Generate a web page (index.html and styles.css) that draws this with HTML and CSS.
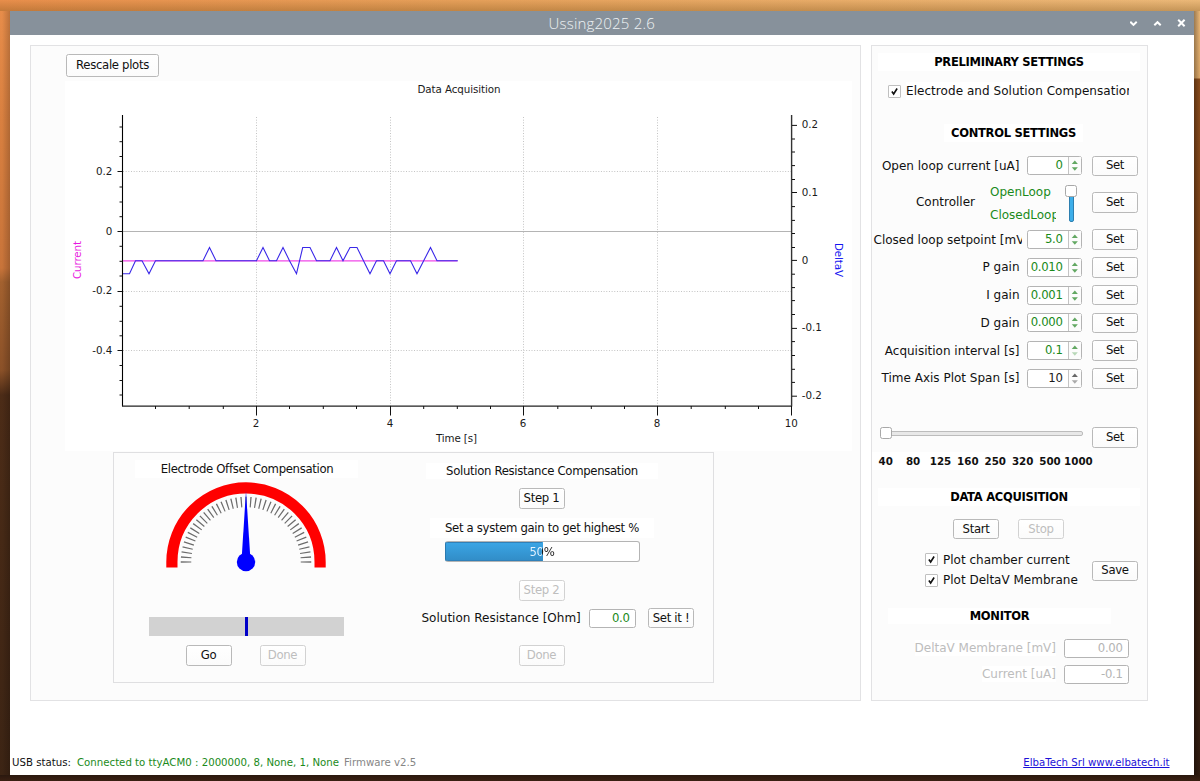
FILE: index.html
```html
<!DOCTYPE html>
<html lang="en">
<head>
<meta charset="utf-8">
<title>Ussing2025 2.6</title>
<link rel="stylesheet" href="styles.css">
</head>
<body>
<div class="window">
  <header class="titlebar">
    <span class="title">Ussing2025 2.6</span>
    <svg class="winbuttons" width="60" height="24" viewBox="1130 11 60 24" fill="none" stroke="#fff" stroke-width="2">
      <path d="M1130.3 21.8l3.2 3.1 3.2-3.1"/>
      <path d="M1154.3 25.3l3.2-3.1 3.2 3.1"/>
      <path d="M1178.2 19.8l6.4 6.4M1184.6 19.8l-6.4 6.4"/>
    </svg>
  </header>
  <main class="content">
    <section class="panel left">
      <button class="btn rescale">Rescale plots</button>
      <svg class="plot" width="787" height="370" viewBox="65 81 787 370">
        <rect x="65" y="81" width="787" height="370" fill="#fff"/>
        <g class="grid">
          <path d="M256.5 117V406M390.5 117V406M523.5 117V406M657.5 117V406"/>
          <path d="M123 171.5H791M123 291.5H791M123 350.5H791"/>
        </g>
        <path d="M123 231.5H791" stroke="#b4b4b4"/>
        <path d="M123 260.8H457.5" stroke="#f048e8" stroke-width="1.2"/>
        <polyline fill="none" stroke="#3a28e8" stroke-width="1.1" points="122,273.7 129.5,273.7 135.5,260.7 142,260.7 149,273.7 155.5,260.7 203,260.7 209.5,247.5 216,260.7 256.5,260.7 263,247.5 269.5,260.7 276.5,260.7 283,247.5 289.5,260.7 296.5,273.7 302.7,247.5 310,247.5 316.5,260.7 330,260.7 336.5,247.5 343,260.7 350,247.5 357,247.5 363.5,260.7 370,273.7 376.5,260.7 383.5,260.7 390,273.7 396.5,260.7 410.5,260.7 417,273.7 430.5,247.5 437,260.7 457.8,260.7"/>
        <path d="M122.5 115V406.3" stroke="#000" stroke-width="1.1"/>
        <path d="M122 406.2H792" stroke="#222" stroke-width="1.3"/>
        <path d="M791.6 115V406.5" stroke="#333" stroke-width="1.4"/>
        <g class="ticks">
          <path d="M117.5 171.5h5M117.5 231.5h5M117.5 291.5h5M117.5 350.5h5"/>
          <path d="M119.5 127h3M119.5 141.7h3M119.5 156.5h3M119.5 187h3M119.5 202h3M119.5 216.7h3M119.5 246.3h3M119.5 261.3h3M119.5 276h3M119.5 306.3h3M119.5 321.3h3M119.5 335.8h3M119.5 365.5h3M119.5 380.5h3M119.5 395h3"/>
          <path d="M792 125.4h5M792 192.5h5M792 260.4h5M792 328.4h5M792 396.2h5"/>
          <path d="M792 139h3M792 152h3M792 165.6h3M792 179.5h3M792 206.6h3M792 220.4h3M792 233.5h3M792 247.5h3M792 274.2h3M792 287.6h3M792 300.6h3M792 314.5h3M792 341.6h3M792 355.5h3M792 369.3h3M792 382.4h3"/>
          <path d="M256.5 406v9.5M390.5 406v9.5M523.5 406v9.5M657.5 406v9.5M791.5 406v9.5"/>
          <path d="M155.5 406v3M189.2 406v3M223.3 406v3M289.5 406v3M323.3 406v3M356.5 406v3M423.7 406v3M457.3 406v3M490.5 406v3M557.8 406v3M591.3 406v3M624.5 406v3M691.2 406v3M725.3 406v3M758.5 406v3"/>
        </g>
        <g class="plottext">
          <text x="459" y="93.3" text-anchor="middle" textLength="83">Data Acquisition</text>
          <g text-anchor="end">
            <text x="112.3" y="175">0.2</text>
            <text x="112.3" y="235">0</text>
            <text x="112.3" y="294.3">-0.2</text>
            <text x="112.3" y="354.3">-0.4</text>
          </g>
          <text x="801.8" y="127.8">0.2</text>
          <text x="801.8" y="196">0.1</text>
          <text x="801.8" y="264">0</text>
          <text x="801.8" y="331">-0.1</text>
          <text x="801.8" y="399.3">-0.2</text>
          <g text-anchor="middle">
            <text x="256" y="427.3">2</text>
            <text x="390" y="427.3">4</text>
            <text x="523" y="427.3">6</text>
            <text x="657" y="427.3">8</text>
            <text x="791.3" y="427.3">10</text>
            <text x="456.5" y="441.8" textLength="41">Time [s]</text>
            <text transform="translate(80.6 260) rotate(-90)" fill="#e818e0" textLength="38">Current</text>
            <text transform="translate(835 260) rotate(90)" fill="#1414f0" textLength="34">DeltaV</text>
          </g>
        </g>
      </svg>
      <div class="frame">
        <div class="offset">
          <div class="cap cap-offset">Electrode Offset Compensation</div>
          <svg class="gauge" width="162" height="92" viewBox="165 481 162 92">
            <clipPath id="upper"><rect x="165" y="481" width="162" height="81.9"/></clipPath>
            <path d="M171.9 567.6V562A74.1 74.1 0 0 1 320.1 562V567.6" fill="none" stroke="#f00" stroke-width="11.2"/>
            <circle cx="246" cy="562" r="60" fill="none" stroke="#6c6c6c" stroke-width="10.5" pathLength="80" stroke-dasharray=".26 .74" stroke-dashoffset=".13" clip-path="url(#upper)"/>
            <path d="M246 491L250.2 556H241.8Z" fill="#00f"/>
            <circle cx="246" cy="562" r="9.2" fill="#00f"/>
          </svg>
          <div class="balance"><i></i></div>
          <div class="pair"><button class="btn">Go</button><button class="btn" disabled>Done</button></div>
        </div>
        <div class="resistance">
          <div class="cap cap-res">Solution Resistance Compensation</div>
          <button class="btn step1">Step 1</button>
          <div class="cap cap-gain">Set a system gain to get highest %</div>
          <div class="progress"><span>50%</span></div>
          <button class="btn step2" disabled>Step 2</button>
          <div class="ohm"><span class="lbl">Solution Resistance [Ohm]</span><span class="field">0.0</span><button class="btn">Set it !</button></div>
          <button class="btn done" disabled>Done</button>
        </div>
      </div>
    </section>

    <section class="panel right">
      <h2 class="h-pre">PRELIMINARY SETTINGS</h2>
      <div class="check comp"><svg class="box" viewBox="0 0 13 13"><path d="M3.4 6.5l2.1 3L9.6 3"/></svg><span class="clip">Electrode and Solution Compensation</span></div>
      <h2 class="h-ctl"><span>CONTROL SETTINGS</span></h2>
      <div class="row"><span class="lbl">Open loop current [uA]</span><span class="spin">0<svg viewBox="0 0 13 17"><path d="M3 7l3.3-4 3.3 4z"/><path d="M3 10.3l3.3 4 3.3-4z"/></svg></span><button class="btn">Set</button></div>
      <div class="controller">
        <span class="lbl">Controller</span>
        <div class="modes"><span>OpenLoop</span><span>ClosedLoop</span></div>
        <div class="vslider"><b></b></div>
        <button class="btn">Set</button>
      </div>
      <div class="row"><span class="lbl cut">Closed loop setpoint [mV]</span><span class="spin">5.0<svg viewBox="0 0 13 17"><path d="M3 7l3.3-4 3.3 4z"/><path d="M3 10.3l3.3 4 3.3-4z"/></svg></span><button class="btn">Set</button></div>
      <div class="row"><span class="lbl">P gain</span><span class="spin">0.010<svg viewBox="0 0 13 17"><path d="M3 7l3.3-4 3.3 4z"/><path d="M3 10.3l3.3 4 3.3-4z"/></svg></span><button class="btn">Set</button></div>
      <div class="row"><span class="lbl">I gain</span><span class="spin">0.001<svg viewBox="0 0 13 17"><path d="M3 7l3.3-4 3.3 4z"/><path d="M3 10.3l3.3 4 3.3-4z"/></svg></span><button class="btn">Set</button></div>
      <div class="row"><span class="lbl">D gain</span><span class="spin">0.000<svg viewBox="0 0 13 17"><path d="M3 7l3.3-4 3.3 4z"/><path d="M3 10.3l3.3 4 3.3-4z"/></svg></span><button class="btn">Set</button></div>
      <div class="row"><span class="lbl">Acquisition interval [s]</span><span class="spin">0.1<svg viewBox="0 0 13 17"><path d="M3 7l3.3-4 3.3 4z"/><path class="off" d="M3 10.3l3.3 4 3.3-4z"/></svg></span><button class="btn">Set</button></div>
      <div class="row"><span class="lbl">Time Axis Plot Span [s]</span><span class="spin black">10<svg viewBox="0 0 13 17"><path d="M3 7l3.3-4 3.3 4z"/><path class="off" d="M3 10.3l3.3 4 3.3-4z"/></svg></span><button class="btn">Set</button></div>
      <div class="sliderrow"><div class="hslider"><b></b></div><button class="btn">Set</button></div>
      <div class="scale"><span>40</span><span>80</span><span>125</span><span>160</span><span>250</span><span>320</span><span>500</span><span>1000</span></div>
      <h2 class="h-acq">DATA ACQUISITION</h2>
      <div class="startstop"><button class="btn">Start</button><button class="btn" disabled>Stop</button></div>
      <div class="plots">
        <div class="checks">
          <div class="check"><svg class="box" viewBox="0 0 13 13"><path d="M3.4 6.5l2.1 3L9.6 3"/></svg><span>Plot chamber current</span></div>
          <div class="check"><svg class="box" viewBox="0 0 13 13"><path d="M3.4 6.5l2.1 3L9.6 3"/></svg><span>Plot DeltaV Membrane</span></div>
        </div>
        <button class="btn">Save</button>
      </div>
      <h2 class="h-mon"><span>MONITOR</span></h2>
      <div class="mon"><span class="lbl">DeltaV Membrane [mV]</span><span class="field">0.00</span></div>
      <div class="mon"><span class="lbl">Current [uA]</span><span class="field">-0.1</span></div>
    </section>
  </main>
  <footer class="status">
    <span class="usb">USB status:</span><span class="conn">Connected to ttyACM0 : 2000000, 8, None, 1, None</span><span class="fw">Firmware v2.5</span>
    <a href="#">ElbaTech Srl www.elbatech.it</a>
  </footer>
</div>
</body>
</html>
```
FILE: styles.css
```css
*, *::before { box-sizing: border-box; }
body {
  margin: 0;
  width: 1200px;
  height: 781px;
  overflow: hidden;
  padding: 11px 6.5px 5.5px 10px;
  font: 12px/16px "DejaVu Sans", sans-serif;
  color: #111;
  background:
    linear-gradient(#0000, #7a501855) 0 0 / 1200px 11px no-repeat,
    linear-gradient(90deg, #e88e4b, #e5a05a 40%, #ebb878 100%) 0 0 / 1200px 11px no-repeat,
    linear-gradient(#2a180e, #3a2012) 0 775px / 1200px 6px no-repeat,
    linear-gradient(90deg, #0000 20%, #00000030) 0 0 / 10px 781px no-repeat,
    linear-gradient(#e88e4b, #d98040 120px, #c8743a 268px, #a3612f 282px, #8b5128 370px, #4c2c17 395px, #3c2414 781px) 0 0 / 10px 781px no-repeat,
    linear-gradient(90deg, #00000060, #0000) 1193px 11px / 7px 770px no-repeat,
    linear-gradient(#ebb878, #dca868 78px, #8a4c1c 79px, #7c441a 260px, #6a3815 420px, #3e2313 580px, #301b10) 1193px 0 / 7px 781px no-repeat;
}
.window { height: 764px; display: flex; flex-direction: column; background: #fff; }

.titlebar {
  height: 24px;
  flex: none;
  display: grid;
  grid-template-columns: 60px 1fr 60px;
  background: #87919b;
  padding-right: 4px;
}
.title {
  grid-column: 2;
  text-align: center;
  padding-left: 4px;
  font: 300 15px/24px "Open Sans", "Noto Sans", sans-serif;
  letter-spacing: .2px;
  color: #eef1f4;
}

.content { display: flex; gap: 10px; padding: 10px 0 0 19.5px; height: 667px; flex: none; }
.panel { background: #fcfcfc; border: 1px solid #e2e2e4; height: 656px; flex: none; }
.left { width: 831.5px; padding: 8px 0 0 34.5px; display: flex; flex-direction: column; align-items: flex-start; }
.right { width: 277px; }

.btn, .cap, .progress, .field, .spin {
  font: 11.7px/17px "DejaVu Sans", sans-serif;
  letter-spacing: -.33px;
}
.btn {
  width: 46px;
  height: 20.5px;
  flex: none;
  padding: 0;
  border: 1px solid #b9b9b9;
  border-radius: 2.5px;
  background: linear-gradient(#fff, #fbfbfb);
  color: #111;
  white-space: nowrap;
}
.btn:disabled { color: #bebebe; border-color: #d2d2d2; }
.rescale { width: 93px; height: 23px; margin: 0 0 4px 1px; }
.plot { display: block; flex: none; }
.grid path { stroke: #c4c4c4; stroke-dasharray: 1 1.67; fill: none; }
.ticks path { stroke: #111; fill: none; }
.plottext { font: 10.3px "DejaVu Sans", sans-serif; fill: #1a1a1a; }

.frame {
  width: 601px;
  height: 231px;
  margin: 1px 0 0 47.5px;
  border: 1px solid #dfdfe1;
  display: flex;
  flex: none;
}
.cap { background: #fff; text-align: center; white-space: nowrap; }
.offset { width: 264px; padding-top: 7px; display: flex; flex-direction: column; align-items: center; }
.cap-offset { width: 223px; height: 18px; line-height: 19px; margin-left: 2px; padding-left: 1px; }
.gauge { display: block; margin-top: 3px; }
.balance { width: 195px; height: 19px; margin: 44px 0 0 1px; background: #d2d2d2; display: flex; justify-content: center; }
.balance i { width: 3px; background: #0000c8; }
.pair { display: flex; gap: 28px; margin-top: 9px; }

.resistance { width: 328px; padding: 10px 0 0 1px; display: flex; flex-direction: column; align-items: center; }
.cap-res { width: 232px; height: 16px; line-height: 17px; }
.step1 { margin: 9px 1px 0 0; }
.cap-gain { width: 224px; height: 20px; line-height: 20px; margin-top: 9.5px; }
.progress {
  width: 195px;
  height: 21px;
  margin-top: 3px;
  border: 1px solid #b4b4b4;
  border-left-color: #2a7ab0;
  border-radius: 3px;
  background:
    linear-gradient(90deg, #3080b8 96px, #0000 96px) 0 0 / 100% 1px no-repeat,
    linear-gradient(90deg, #3080b8 96px, #0000 96px) 0 100% / 100% 1px no-repeat,
    linear-gradient(#3ba6e6, #318cc6) 0 0 / 97px 100% no-repeat,
    #fff;
  display: flex;
  justify-content: center;
}
/* the value is light over the filled half and dark over the rest */
.progress span {
  line-height: 20px;
  color: transparent;
  background: linear-gradient(90deg, #e8f4ff 50%, #1a1a1a 50%);
  background-clip: text;
  -webkit-background-clip: text;
}
.step2 { margin: 18px 1px 0 0; }
.ohm { display: flex; align-items: center; width: 273px; height: 21px; margin: 7px 0 0 31px; }
.ohm .lbl { width: 168px; white-space: nowrap; padding-left: .5px; line-height: 18px; }
.field {
  height: 19px;
  border: 1px solid #b4b4b4;
  border-radius: 2.5px;
  background: #fff;
  text-align: right;
  padding-right: 5.5px;
  color: #1a8a1a;
}
.ohm .field { width: 47px; margin-right: 12px; }
.done { margin: 16.5px 1px 0 0; }

h2 { margin: 0; font: bold 11.5px/18px "DejaVu Sans", sans-serif; letter-spacing: -.28px; text-align: center; color: #000; }
.h-pre, .h-acq { margin-left: 6px; width: 262px; background: #fff; }
.h-pre { margin-top: 7px; line-height: 19px; height: 18px; }
.check { display: flex; align-items: center; gap: 5px; white-space: nowrap; }
.box { width: 13px; height: 13px; flex: none; border: 1px solid #c0c0c0; border-radius: 1px; background: #fff; }
.box path { fill: none; stroke: #111; stroke-width: 1.9; }
.comp { margin: 11px 0 0 16px; height: 18px; width: 241px; }
.clip { overflow: hidden; background: #fff; line-height: 18px; letter-spacing: .05px; }
.h-ctl { margin: 24px 0 0 72px; width: 139px; height: 18px; }
.h-ctl span, .h-mon span { display: block; background: #fff; }
.row { display: flex; align-items: center; height: 27.75px; }
.h-ctl + .row { margin-top: 10px; }
.row .lbl { width: 147.5px; margin-right: 7.5px; text-align: right; white-space: nowrap; }
.row .cut { width: 149.5px; padding-left: 1.5px; margin-right: 5.5px; text-align: left; overflow: hidden; }
.spin {
  width: 55px;
  height: 19px;
  margin-right: 10px;
  border: 1px solid #b4b4b4;
  border-radius: 2.5px;
  background: #fff;
  display: flex;
  justify-content: flex-end;
  color: #1a8a1a;
}
.spin svg { width: 13px; height: 17px; margin-left: 5.5px; border-left: 1px solid #c4c4c4; background: #fcfcfc; }
.spin path { fill: #62a862; }
.spin .off { fill: #b8d8b8; }
.spin.black { color: #1a1a1a; }
.spin.black path { fill: #666; }
.spin.black .off { fill: #aaa; }

.controller { display: flex; align-items: center; height: 46px; }
.controller .lbl { width: 103px; text-align: right; margin: -2px 15px 0 0; }
.controller .btn { margin-top: -1px; }
.modes { width: 66px; margin-right: 9px; color: #1a8a1a; overflow: hidden; display: flex; flex-direction: column; gap: 7px; margin-top: 2px; }
.modes span { display: block; }
.vslider { width: 12px; height: 37px; margin: 2px 15px 0 0; position: relative; }
.vslider::before { content: ""; position: absolute; left: 3.5px; top: 10px; width: 5px; height: 27px; background: #3daee9; border: 1px solid #2d7fb0; border-radius: 2px; }
.vslider b, .hslider b { position: absolute; left: 0; top: 0; width: 12px; height: 12px; border: 1px solid #a8a8a8; border-radius: 2.5px; background: #fff; }

.sliderrow { display: flex; align-items: center; height: 21px; margin: 34.5px 0 0 8px; }
.hslider { position: relative; width: 203px; height: 13px; margin: -8px 9px 0 0; }
.hslider::before { content: ""; position: absolute; left: 2px; right: 0; top: 4px; height: 5px; border: 1px solid #bcbcbc; border-radius: 2px; background: #e8e8e8; }
.scale {
  display: grid;
  grid-template-columns: repeat(8, 27.4px);
  width: 220px;
  height: 18px;
  margin-top: 4px;
  background: #fff;
  font: bold 10.3px/18px "DejaVu Sans", sans-serif;
  color: #111;
}
.scale span { justify-self: center; }
.scale span:last-child { padding-left: 2px; }
.h-acq { margin-top: 18.5px; }
.startstop { display: flex; gap: 19px; margin: 12.5px 0 0 81px; }
.plots { display: flex; align-items: center; height: 40px; margin: 10.5px 0 0 53px; }
.plots .btn { margin-top: 2px; }
.checks { width: 167px; display: flex; flex-direction: column; gap: 4.5px; }
.h-mon { margin: 18.5px 0 0 16px; width: 223px; height: 16px; }
.h-mon span { line-height: 17px; height: 16px; }
.mon { display: flex; align-items: center; justify-content: flex-end; gap: 8px; height: 26px; width: 257px; color: #bdbdbd; }
.h-mon + .mon { margin-top: 11px; }
.mon .lbl { background: #fff; }
.mon .field { width: 65px; color: #b4b4b4; }

.status { display: flex; align-items: center; height: 20px; margin-top: 51px; padding: 0 24px 0 2px; font-size: 10.2px; white-space: nowrap; flex: none; }
.usb { width: 65px; }
.conn { color: #1a8a1a; width: 267px; }
.fw { color: #868686; }
.status a { color: #1c12d8; margin-left: auto; }
```
